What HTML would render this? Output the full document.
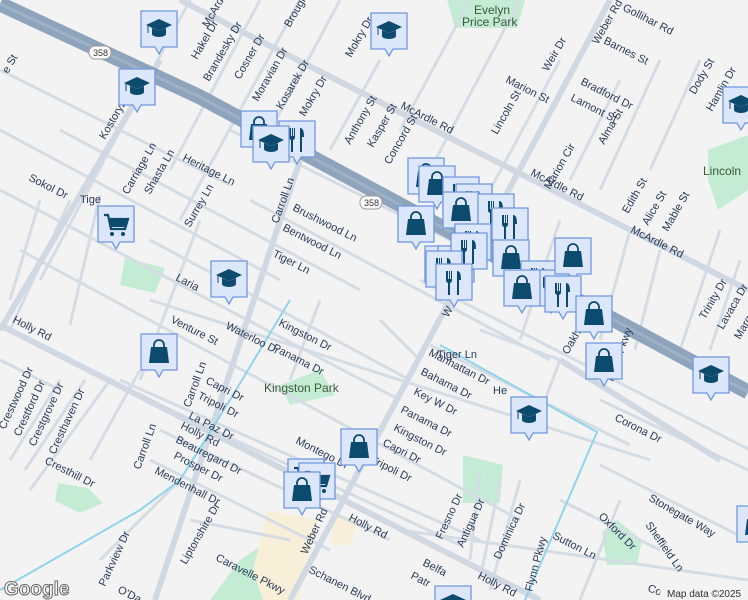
<!DOCTYPE html>
<html><head><meta charset="utf-8"><style>
html,body{margin:0;padding:0;width:748px;height:600px;overflow:hidden;background:#f4f3f4}
svg{display:block}
text{font-family:"Liberation Sans",sans-serif;font-size:11px;fill:#2a3b57}
.w{stroke:#d4dce4;fill:none;stroke-width:3}
.m{stroke:#d0d9e2;fill:none;stroke-width:6}
</style></head><body>
<svg width="748" height="600" viewBox="0 0 748 600">
<defs>
<g id="box"><path d="M1,1h36v36h-14l-4,7l-4,-7h-14z" fill="#dde7fc" stroke="#7097df" stroke-width="1.3"/></g>
<g id="bag"><use href="#box"/><path d="M11,14h16l2,16h-20z" fill="#0c4a6e"/><path d="M14,15v-3a5,5 0 0 1 10,0v3" fill="none" stroke="#0c4a6e" stroke-width="1.8"/></g>
<g id="fork"><use href="#box"/><path d="M11,8v9a3,3 0 0 0 2,3v12h2v-12a3,3 0 0 0 2,-3v-9h-1v8h-1v-8h-1v8h-1v-8z" fill="#0c4a6e"/><path d="M22,8c3,0 4,3 4,9h-2v15h-2z" fill="#0c4a6e"/></g>
<g id="grad"><use href="#box"/><path d="M6,15l13,-6l13,6l-13,6z" fill="#0c4a6e"/><path d="M12,18v6a7,3 0 0 0 14,0v-6l-7,3z" fill="#0c4a6e"/><path d="M8,16v7" stroke="#0c4a6e" stroke-width="1"/></g>
<g id="cart"><use href="#box"/><path d="M7,10h4l3,14h14l3,-10h-18" fill="none" stroke="#0c4a6e" stroke-width="2.2"/><path d="M13,15h17l-2,7h-14z" fill="#0c4a6e"/><circle cx="15" cy="29" r="2" fill="#0c4a6e"/><circle cx="26" cy="29" r="2" fill="#0c4a6e"/></g>
</defs>
<!-- parks -->
<path d="M447,0h78l-8,28h-62z" fill="#c4ecd4"/>
<path d="M708,150l40,-15v55l-30,20l-10,-30z" fill="#c4ecd4"/>
<path d="M125,258l40,10l-10,25l-35,-8z" fill="#c4ecd4"/>
<path d="M280,385l40,-15l15,25l-45,10z" fill="#c4ecd4"/>
<path d="M463,455l40,10l-3,38h-37z" fill="#c4ecd4"/>
<path d="M58,483l30,5l15,15l-23,10l-25,-12z" fill="#c4ecd4"/>
<path d="M240,560l30,-20l10,60h-70z" fill="#c4ecd4"/>
<path d="M602,532l15,-12l25,20l-5,25h-30z" fill="#c4ecd4"/>
<path d="M268,510l50,10l-20,80h-35l-10,-30z" fill="#f8efd9"/>
<path d="M332,512l25,8l-5,25h-20z" fill="#f8efd9"/>
<!-- minor streets -->
<g class="w">
<path d="M0,70l230,115 M0,130l280,150 M60,130l300,160 M0,190l400,210 M20,250l500,270 M150,300l500,160 M150,240l260,140"/>
<path d="M230,130l280,140 M250,200l300,160 M120,380l360,160 M160,405l300,140 M160,430l230,110 M150,460l180,90 M420,280l330,170 M430,345l200,100"/>
<path d="M190,0l-150,280 M260,0l-90,170 M300,0l-120,220 M340,0l-80,150 M380,60l-50,90 M470,0l-70,130 M520,0l-90,170 M560,60l-70,130 M620,80l-50,100 M660,60l-60,130 M700,60l-50,110 M720,230l-40,120 M740,260l-30,90"/>
<path d="M200,220l-60,160 M100,195l-30,130 M70,200l-60,130 M40,200l-30,100 M110,380l-80,110 M85,380l-60,90 M60,380l-50,80 M140,370l-50,90"/>
<path d="M630,230l-30,110 M660,250l-25,100 M560,220l-40,120 M480,330l80,30l-15,40 M600,400l148,70 M600,465l148,75 M620,500l-40,100 M520,480l-30,110 M500,480l-20,100 M480,470l-10,90 M380,320l40,40 M320,300l-30,80"/>
<path d="M0,360l60,30 M400,530l348,50 M100,560l80,-80 M190,520l100,20 M560,500l100,50"/>
</g>
<!-- major roads -->
<g class="m">
<path d="M180,0l568,290"/>
<path d="M0,325l540,275"/>
<path d="M300,160l-145,440"/>
<path d="M610,0l-320,600"/>
<path d="M160,60l-160,270"/>
<path d="M560,360l160,100"/>
</g>
<path d="M440,345L597,432L525,600 M0,590l140,-80l40,-30l50,-80l60,-100" stroke="#8fd4ec" stroke-width="2" fill="none"/>
<!-- highway -->
<path d="M0,4L200,97L748,392" stroke="#8ea3bc" stroke-width="15" fill="none"/>
<path d="M0,4L200,97L748,392" stroke="#9fb1c7" stroke-width="3" fill="none"/>
<rect x="89" y="46" width="22" height="13" rx="6" fill="#fff" stroke="#999"/><text x="93" y="56" style="font-size:9px;fill:#333">358</text>
<rect x="360" y="196" width="22" height="13" rx="6" fill="#fff" stroke="#999"/><text x="364" y="206" style="font-size:9px;fill:#333">358</text>
<!-- labels -->
<g>
<text x="208" y="28" transform="rotate(-60 208 28)">McArdle Rd</text>
<text x="400" y="108" transform="rotate(27 400 108)">McArdle Rd</text>
<text x="530" y="175" transform="rotate(27 530 175)">McArdle Rd</text>
<text x="630" y="232" transform="rotate(27 630 232)">McArdle Rd</text>
<text x="474" y="14" style="font-size:12px;fill:#3a5a3a">Evelyn</text>
<text x="462" y="26" style="font-size:12px;fill:#3a5a3a">Price Park</text>
<text x="703" y="175" style="font-size:12px;fill:#3a5a3a">Lincoln</text>
<text x="264" y="392" style="font-size:12px;fill:#3a5a3a">Kingston Park</text>
<text x="622" y="10" transform="rotate(27 622 10)">Gollihar Rd</text>
<text x="598" y="45" transform="rotate(-60 598 45)">Weber Rd</text>
<text x="603" y="43" transform="rotate(27 603 43)">Barnes St</text>
<text x="580" y="84" transform="rotate(27 580 84)">Bradford Dr</text>
<text x="570" y="100" transform="rotate(27 570 100)">Lamont St</text>
<text x="505" y="82" transform="rotate(27 505 82)">Marion St</text>
<text x="497" y="135" transform="rotate(-60 497 135)">Lincoln St</text>
<text x="548" y="72" transform="rotate(-60 548 72)">Weir Dr</text>
<text x="695" y="95" transform="rotate(-60 695 95)">Dody St</text>
<text x="712" y="112" transform="rotate(-60 712 112)">Hamlin Dr</text>
<text x="550" y="190" transform="rotate(-60 550 190)">Marion Cir</text>
<text x="604" y="145" transform="rotate(-60 604 145)">Alma St</text>
<text x="628" y="214" transform="rotate(-60 628 214)">Edith St</text>
<text x="648" y="226" transform="rotate(-60 648 226)">Alice St</text>
<text x="668" y="232" transform="rotate(-60 668 232)">Mable St</text>
<text x="705" y="320" transform="rotate(-60 705 320)">Trinity Dr</text>
<text x="723" y="330" transform="rotate(-60 723 330)">Lavaca Dr</text>
<text x="740" y="340" transform="rotate(-60 740 340)">Margo Dr</text>
<text x="568" y="355" transform="rotate(-60 568 355)">Oakhurst Dr</text>
<text x="613" y="382" transform="rotate(-70 613 382)">Flynn Pkwy</text>
<text x="614" y="420" transform="rotate(27 614 420)">Corona Dr</text>
<text x="648" y="500" transform="rotate(30 648 500)">Stonegate Way</text>
<text x="598" y="517" transform="rotate(45 598 517)">Oxford Dr</text>
<text x="645" y="525" transform="rotate(55 645 525)">Sheffield Ln</text>
<text x="552" y="538" transform="rotate(27 552 538)">Sutton Ln</text>
<text x="532" y="592" transform="rotate(-75 532 592)">Flynn Pkwy</text>
<text x="647" y="591" transform="rotate(20 647 591)">Co</text>
<text x="350" y="145" transform="rotate(-60 350 145)">Anthony St</text>
<text x="373" y="148" transform="rotate(-60 373 148)">Kasper St</text>
<text x="390" y="165" transform="rotate(-60 390 165)">Concord St</text>
<text x="351" y="58" transform="rotate(-60 351 58)">Mokry Dr</text>
<text x="290" y="28" transform="rotate(-60 290 28)">Brougham</text>
<text x="197" y="60" transform="rotate(-60 197 60)">Hakel Dr</text>
<text x="209" y="82" transform="rotate(-60 209 82)">Brandesky Dr</text>
<text x="240" y="80" transform="rotate(-60 240 80)">Cosner Dr</text>
<text x="258" y="102" transform="rotate(-60 258 102)">Moravian Dr</text>
<text x="282" y="110" transform="rotate(-60 282 110)">Kosarek Dr</text>
<text x="305" y="117" transform="rotate(-60 305 117)">Mokry Dr</text>
<text x="105" y="140" transform="rotate(-60 105 140)">Kostoryz</text>
<text x="182" y="160" transform="rotate(27 182 160)">Heritage Ln</text>
<text x="128" y="195" transform="rotate(-60 128 195)">Carriage Ln</text>
<text x="150" y="195" transform="rotate(-60 150 195)">Shasta Ln</text>
<text x="190" y="228" transform="rotate(-60 190 228)">Surrey Ln</text>
<text x="28" y="180" transform="rotate(27 28 180)">Sokol Dr</text>
<text x="80" y="203">Tige</text>
<text x="278" y="224" transform="rotate(-70 278 224)">Carroll Ln</text>
<text x="292" y="210" transform="rotate(27 292 210)">Brushwood Ln</text>
<text x="282" y="230" transform="rotate(27 282 230)">Bentwood Ln</text>
<text x="272" y="256" transform="rotate(27 272 256)">Tiger Ln</text>
<text x="175" y="280" transform="rotate(27 175 280)">Laria</text>
<text x="170" y="322" transform="rotate(27 170 322)">Venture St</text>
<text x="225" y="328" transform="rotate(27 225 328)">Waterloo Dr</text>
<text x="278" y="325" transform="rotate(27 278 325)">Kingston Dr</text>
<text x="272" y="350" transform="rotate(27 272 350)">Panama Dr</text>
<text x="190" y="408" transform="rotate(-70 190 408)">Carroll Ln</text>
<text x="205" y="383" transform="rotate(27 205 383)">Capri Dr</text>
<text x="197" y="398" transform="rotate(27 197 398)">Tripoli Dr</text>
<text x="188" y="418" transform="rotate(27 188 418)">La Paz Dr</text>
<text x="180" y="428" transform="rotate(27 180 428)">Holly Rd</text>
<text x="175" y="442" transform="rotate(27 175 442)">Beauregard Dr</text>
<text x="173" y="458" transform="rotate(27 173 458)">Prosper Dr</text>
<text x="154" y="473" transform="rotate(27 154 473)">Mendenhall Dr</text>
<text x="140" y="470" transform="rotate(-70 140 470)">Carroll Ln</text>
<text x="186" y="565" transform="rotate(-60 186 565)">Liptonshire Dr</text>
<text x="215" y="560" transform="rotate(27 215 560)">Caravelle Pkwy</text>
<text x="105" y="587" transform="rotate(-65 105 587)">Parkview Dr</text>
<text x="117" y="592" transform="rotate(27 117 592)">O'Da</text>
<text x="12" y="322" transform="rotate(27 12 322)">Holly Rd</text>
<text x="5" y="430" transform="rotate(-65 5 430)">Crestwood Dr</text>
<text x="20" y="437" transform="rotate(-65 20 437)">Crestford Dr</text>
<text x="35" y="447" transform="rotate(-65 35 447)">Crestgrove Dr</text>
<text x="55" y="455" transform="rotate(-65 55 455)">Cresthaven Dr</text>
<text x="44" y="463" transform="rotate(27 44 463)">Cresthill Dr</text>
<text x="295" y="443" transform="rotate(27 295 443)">Montego Dr</text>
<text x="370" y="462" transform="rotate(27 370 462)">Tripoli Dr</text>
<text x="382" y="445" transform="rotate(27 382 445)">Capri Dr</text>
<text x="393" y="430" transform="rotate(27 393 430)">Kingston Dr</text>
<text x="400" y="412" transform="rotate(27 400 412)">Panama Dr</text>
<text x="413" y="394" transform="rotate(27 413 394)">Key W Dr</text>
<text x="420" y="374" transform="rotate(27 420 374)">Bahama Dr</text>
<text x="428" y="355" transform="rotate(27 428 355)">Manhattan Dr</text>
<text x="437" y="358">Tiger Ln</text>
<text x="493" y="394">He</text>
<text x="448" y="318" transform="rotate(-60 448 318)">W</text>
<text x="307" y="555" transform="rotate(-65 307 555)">Weber Rd</text>
<text x="348" y="520" transform="rotate(27 348 520)">Holly Rd</text>
<text x="477" y="578" transform="rotate(27 477 578)">Holly Rd</text>
<text x="308" y="572" transform="rotate(27 308 572)">Schanen Blvd</text>
<text x="442" y="540" transform="rotate(-65 442 540)">Fresno Dr</text>
<text x="463" y="548" transform="rotate(-65 463 548)">Antigua Dr</text>
<text x="500" y="560" transform="rotate(-65 500 560)">Dominica Dr</text>
<text x="410" y="578" transform="rotate(27 410 578)">Patr</text>
<text x="422" y="565" transform="rotate(27 422 565)">Belfa</text>
<text x="8" y="74" transform="rotate(-60 8 74)">e St</text>
</g>
<!-- markers -->
<use href="#grad" x="140" y="10"/>
<use href="#grad" x="370" y="12"/>
<use href="#grad" x="118" y="68"/>
<use href="#grad" x="722" y="86"/>
<use href="#bag" x="240" y="110"/>
<use href="#fork" x="278" y="120"/>
<use href="#grad" x="252" y="125"/>
<use href="#bag" x="407" y="157"/>
<use href="#bag" x="418" y="165"/>
<use href="#fork" x="442" y="176"/>
<use href="#fork" x="455" y="183"/>
<use href="#cart" x="97" y="205"/>
<use href="#bag" x="397" y="205"/>
<use href="#bag" x="442" y="191"/>
<use href="#fork" x="477" y="193"/>
<use href="#fork" x="491" y="207"/>
<use href="#fork" x="454" y="223"/>
<use href="#fork" x="424" y="245"/>
<use href="#fork" x="437" y="245"/>
<use href="#fork" x="450" y="232"/>
<use href="#fork" x="425" y="250"/>
<use href="#fork" x="435" y="263"/>
<use href="#bag" x="492" y="239"/>
<use href="#fork" x="520" y="260"/>
<use href="#fork" x="532" y="269"/>
<use href="#bag" x="554" y="237"/>
<use href="#bag" x="503" y="269"/>
<use href="#fork" x="544" y="275"/>
<use href="#grad" x="210" y="260"/>
<use href="#bag" x="575" y="295"/>
<use href="#bag" x="140" y="333"/>
<use href="#bag" x="585" y="342"/>
<use href="#grad" x="692" y="356"/>
<use href="#grad" x="510" y="396"/>
<use href="#bag" x="340" y="428"/>
<use href="#cart" x="287" y="458"/>
<use href="#cart" x="298" y="462"/>
<use href="#bag" x="283" y="471"/>
<use href="#bag" x="736" y="505"/>
<use href="#grad" x="434" y="585"/>
<text x="4" y="595" style="font-size:19px;font-weight:bold;fill:#fff;stroke:#666;stroke-width:1">Google</text>
<rect x="660" y="586" width="88" height="14" fill="#f4f3f4" opacity="0.8"/>
<text x="667" y="597" style="font-size:10px;fill:#333">Map data ©2025</text>
</svg>
</body></html>
